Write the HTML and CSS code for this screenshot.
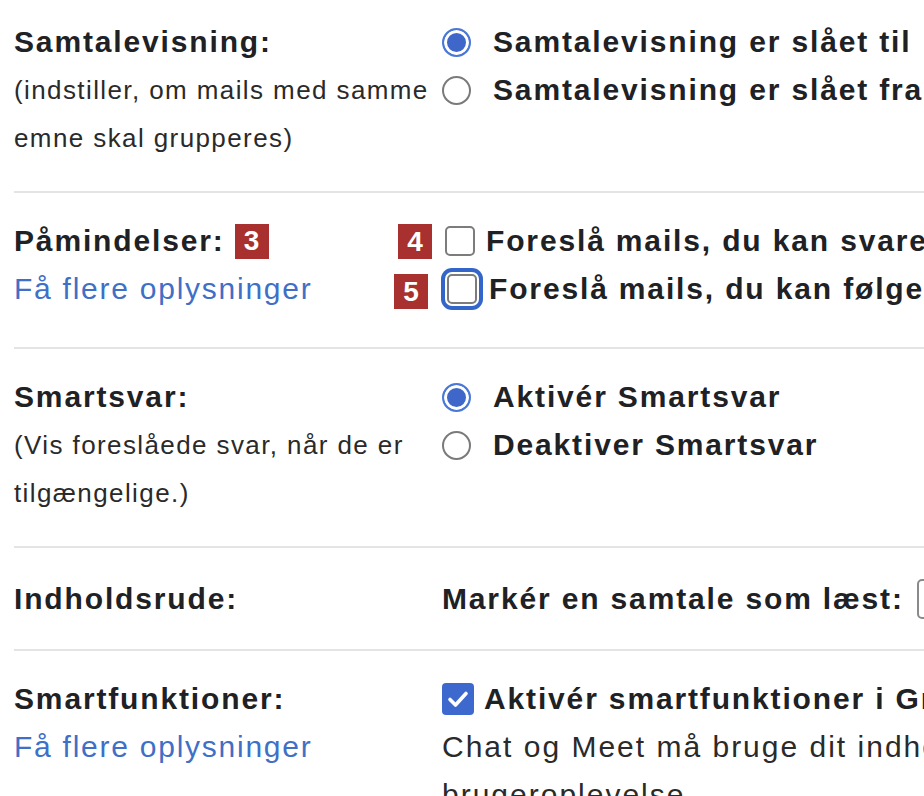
FILE: index.html
```html
<!DOCTYPE html>
<html lang="da">
<head>
<meta charset="utf-8">
<title>Indstillinger</title>
<link rel="stylesheet" href="styles.css">
</head>
<body>
<div class="settings">
  <section class="row row-1">
    <div class="label-col">
      <div class="label">Samtalevisning:</div>
      <div class="sub">(indstiller, om mails med samme</div>
      <div class="sub">emne skal grupperes)</div>
    </div>
    <div class="opt-col">
      <div class="opt opt-radio"><span class="radio checked"></span><span class="opt-text">Samtalevisning er slået til</span></div>
      <div class="opt opt-radio"><span class="radio"></span><span class="opt-text">Samtalevisning er slået fra</span></div>
    </div>
  </section>

  <section class="row row-2">
    <div class="label-col">
      <div class="label">Påmindelser: <span class="badge badge-inline">3</span></div>
      <div class="link">Få flere oplysninger</div>
    </div>
    <div class="opt-col">
      <div class="opt opt-check"><span class="badge badge-abs badge-4">4</span><span class="checkbox"></span><span class="opt-text">Foreslå mails, du kan svare på</span></div>
      <div class="opt opt-check"><span class="badge badge-abs badge-5">5</span><span class="checkbox focused"></span><span class="opt-text">Foreslå mails, du kan følge op på</span></div>
    </div>
  </section>

  <section class="row row-3">
    <div class="label-col">
      <div class="label">Smartsvar:</div>
      <div class="sub">(Vis foreslåede svar, når de er</div>
      <div class="sub">tilgængelige.)</div>
    </div>
    <div class="opt-col">
      <div class="opt opt-radio"><span class="radio checked"></span><span class="opt-text">Aktivér Smartsvar</span></div>
      <div class="opt opt-radio"><span class="radio"></span><span class="opt-text">Deaktiver Smartsvar</span></div>
    </div>
  </section>

  <section class="row row-4">
    <div class="label-col">
      <div class="label">Indholdsrude:</div>
    </div>
    <div class="opt-col">
      <div class="opt"><span class="opt-text">Markér en samtale som læst:</span><span class="select">efter 3 sekunder</span></div>
    </div>
  </section>

  <section class="row row-5">
    <div class="label-col">
      <div class="label">Smartfunktioner:</div>
      <div class="link">Få flere oplysninger</div>
    </div>
    <div class="opt-col">
      <div class="opt opt-checked"><span class="checkbox-on"><svg viewBox="0 0 32 32" width="32" height="32"><path d="M8 16.5 L13.5 22 L24 10.5" fill="none" stroke="#fff" stroke-width="3.6" stroke-linecap="round" stroke-linejoin="round"/></svg></span><span class="opt-text">Aktivér smartfunktioner i Gmail, Chat og Meet</span></div>
      <div class="desc">Chat og Meet må bruge dit indhold og din aktivitet til at give dig en personlig</div>
      <div class="desc">brugeroplevelse</div>
    </div>
  </section>
</div>
</body>
</html>
```

FILE: styles.css
```css
html, body {
  margin: 0;
  padding: 0;
  background: #fff;
  overflow: hidden;
  width: 924px;
  height: 796px;
}

body {
  font-family: "Liberation Sans", Arial, sans-serif;
  color: #202124;
}

.settings {
  padding-left: 14px;
}

.row {
  display: grid;
  grid-template-columns: 428px 1fr;
  border-top: 2px solid #e4e4e4;
}

.row-1 { border-top: none; padding: 18px 0 29px; }
.row-2 { padding: 24px 0 34px; }
.row-3 { padding: 24px 0 29px; }
.row-4 { padding: 27px 0 26px; }
.row-5 { padding: 24px 0 0; }

.label-col, .opt-col {
  min-width: 0;
}

.label {
  font-weight: bold;
  font-size: 30px;
  letter-spacing: 1.85px;
  line-height: 48px;
  height: 48px;
  white-space: nowrap;
  display: flex;
  align-items: center;
}

.sub {
  font-size: 26px;
  letter-spacing: 1.4px;
  line-height: 48px;
  white-space: nowrap;
  color: #2a2a2a;
}

.link {
  font-size: 30px;
  letter-spacing: 1.75px;
  line-height: 48px;
  color: #3f6fc6;
  white-space: nowrap;
}

.opt {
  position: relative;
  display: flex;
  align-items: center;
  height: 48px;
  white-space: nowrap;
}

.opt-text {
  font-weight: bold;
  font-size: 30px;
  letter-spacing: 1.85px;
}

.opt-radio { gap: 22px; }
.opt-check { gap: 11px; }
.opt-checked { gap: 10px; }

.radio {
  flex: none;
  width: 29px;
  height: 29px;
  box-sizing: border-box;
  border-radius: 50%;
  border: 2px solid #7a7a7a;
  background: #fff;
}

.radio.checked {
  border: 2px solid #4a78d6;
  background: #3f67c9;
  box-shadow: inset 0 0 0 3px #fff;
}

.checkbox {
  flex: none;
  margin-left: 3px;
  width: 30px;
  height: 30px;
  box-sizing: border-box;
  border: 2px solid #7c7c7c;
  border-radius: 5px;
  background: #fff;
}

.checkbox.focused {
  margin-left: 5px;
  margin-right: 1px;
  box-shadow: 0 0 0 2px #fff, 0 0 0 6px #3465c8;
}

.checkbox-on {
  flex: none;
  width: 32px;
  height: 32px;
  border-radius: 4px;
  background: #3d69cf;
  display: block;
}

.checkbox-on svg {
  display: block;
}

.badge {
  display: inline-flex;
  align-items: center;
  justify-content: center;
  width: 34px;
  height: 35px;
  background: #a8302f;
  color: #fff;
  font-weight: bold;
  font-size: 28px;
  letter-spacing: 0;
  line-height: 1;
}

.badge-inline {
  margin-left: 10px;
}

.badge-abs {
  position: absolute;
  top: 50%;
  margin-top: -17px;
}

.badge-4 { left: -44px; }
.badge-5 { left: -48px; margin-top: -15px; }

.select {
  flex: none;
  margin-left: 13px;
  height: 40px;
  width: 200px;
  box-sizing: border-box;
  border: 2px solid #8a8a8a;
  border-radius: 5px;
  font-size: 24px;
  line-height: 36px;
  padding-left: 10px;
  color: #202124;
}

.desc {
  font-size: 30px;
  letter-spacing: 2px;
  line-height: 48px;
  white-space: nowrap;
  color: #2a2a2a;
}
```
